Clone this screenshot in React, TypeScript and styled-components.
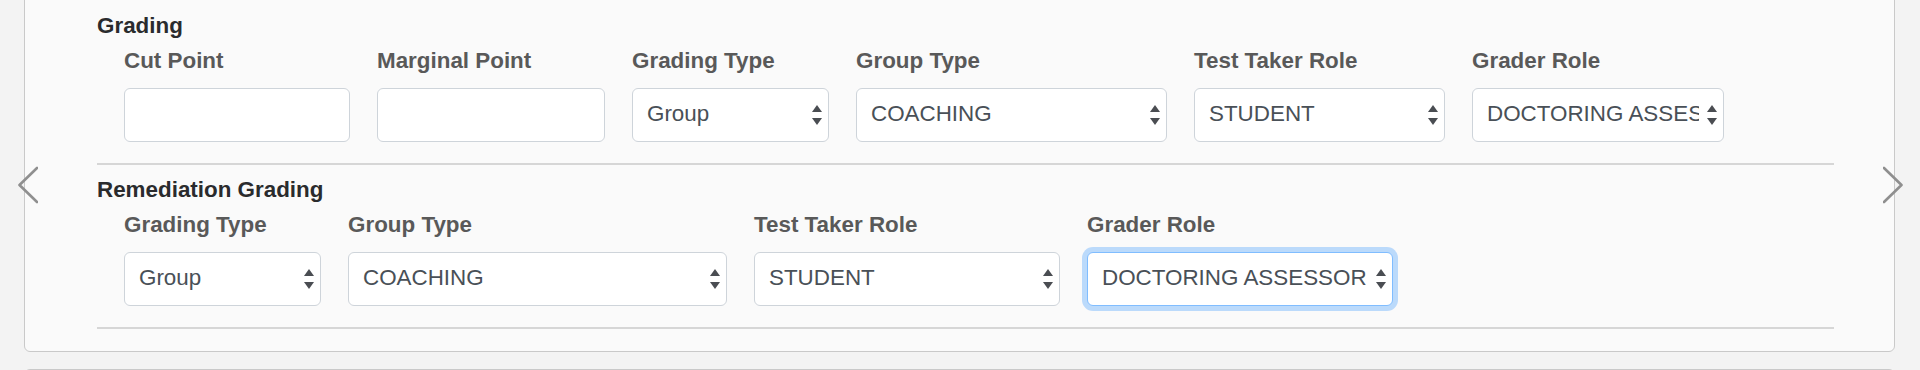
import React from "react";
import styled, { createGlobalStyle, css } from "styled-components";

const GlobalStyle = createGlobalStyle`
	html, body {
		margin: 0;
		padding: 0;
		background: #f3f3f3;
	}
	body {
		font-family: "Liberation Sans", Helvetica, Arial, sans-serif;
	}
`;

const Page = styled.div`
	position: relative;
	display: flex;
	flex-direction: column;
	padding: 0 25px 0 24px;
	height: 370px;
	overflow: hidden;
`;

const Panel = styled.div<{ $offset?: number }>`
	flex-shrink: 0;
	margin-top: ${({ $offset }) => $offset ?? 0}px;
	background: #fafafa;
	border: 1px solid #c9c9c9;
	border-radius: 6px;
	padding: 26px 60px 22px 72px;
	min-height: 60px;
`;

const Section = styled.section`
	padding-bottom: 21px;
	border-bottom: 2px solid #d6d6d6;
	& + & {
		margin-top: 12px;
	}
`;

const SectionTitle = styled.h4`
	margin: 0;
	font-size: 22.4px;
	line-height: 25px;
	font-weight: 700;
	color: #2a2b2d;
`;

const FieldRow = styled.div`
	display: flex;
	gap: 27px;
	margin-top: 10px;
	padding-left: 27px;
`;

const Field = styled.div<{ $width: number }>`
	display: flex;
	flex-direction: column;
	width: ${({ $width }) => $width}px;
`;

const Label = styled.label`
	font-size: 22.4px;
	line-height: 25px;
	font-weight: 700;
	color: #595959;
	margin-bottom: 15px;
	white-space: nowrap;
`;

const controlBase = css`
	box-sizing: border-box;
	width: 100%;
	height: 54px;
	margin: 0;
	background: #fff;
	border: 1px solid #ced4da;
	border-radius: 6px;
	font-family: "Liberation Sans", Helvetica, Arial, sans-serif;
	font-size: 22.4px;
	color: #495057;
	outline: none;
`;

const TextInput = styled.input`
	${controlBase};
	padding: 0 14px;
`;

const SelectWrap = styled.div`
	position: relative;
	height: 54px;
`;

const Select = styled.select<{ $focused?: boolean }>`
	${controlBase};
	appearance: none;
	-webkit-appearance: none;
	padding: 0 24px 3px 14px;
	${({ $focused }) =>
		$focused &&
		css`
			border-color: #80bdff;
			box-shadow: 0 0 0 5px rgba(0, 123, 255, 0.25);
		`}
`;

const SelectArrows = styled.svg`
	position: absolute;
	right: 7px;
	top: 50%;
	transform: translateY(-50%);
	pointer-events: none;
`;

const NavArrow = styled.div<{ $side: "left" | "right" }>`
	position: absolute;
	top: 166px;
	${({ $side }) => ($side === "left" ? "left: 18px;" : "right: 17px;")}
	width: 20px;
	height: 38px;
	cursor: pointer;
`;

type FieldDef = {
	label: string;
	width: number;
	kind: "input" | "select";
	options?: string[];
	value?: string;
	focused?: boolean;
};

const gradingTypes = ["Group", "Individual"];
const groupTypes = ["COACHING", "DOCTORING", "CLINICAL SKILLS"];
const takerRoles = ["STUDENT", "RESIDENT"];
const graderRoles = ["DOCTORING ASSESSOR", "COACH", "FACULTY"];

const sections: { title: string; fields: FieldDef[] }[] = [
	{
		title: "Grading",
		fields: [
			{ label: "Cut Point", width: 226, kind: "input" },
			{ label: "Marginal Point", width: 228, kind: "input" },
			{ label: "Grading Type", width: 197, kind: "select", options: gradingTypes, value: "Group" },
			{ label: "Group Type", width: 311, kind: "select", options: groupTypes, value: "COACHING" },
			{ label: "Test Taker Role", width: 251, kind: "select", options: takerRoles, value: "STUDENT" },
			{
				label: "Grader Role",
				width: 252,
				kind: "select",
				options: graderRoles,
				value: "DOCTORING ASSESSOR",
			},
		],
	},
	{
		title: "Remediation Grading",
		fields: [
			{ label: "Grading Type", width: 197, kind: "select", options: gradingTypes, value: "Group" },
			{ label: "Group Type", width: 379, kind: "select", options: groupTypes, value: "COACHING" },
			{ label: "Test Taker Role", width: 306, kind: "select", options: takerRoles, value: "STUDENT" },
			{
				label: "Grader Role",
				width: 306,
				kind: "select",
				options: graderRoles,
				value: "DOCTORING ASSESSOR",
				focused: true,
			},
		],
	},
];

const UpDown = () => (
	<SelectArrows width="10" height="20" viewBox="0 0 10 20">
		<polygon points="5,0 10,7 0,7" fill="#4a4d52" />
		<polygon points="0,13 10,13 5,20" fill="#4a4d52" />
	</SelectArrows>
);

const Chevron = ({ side }: { side: "left" | "right" }) => (
	<NavArrow $side={side}>
		<svg width="20" height="38" viewBox="0 0 20 38">
			<polyline
				points={side === "left" ? "19,2 1.5,19 19,36" : "1,2 18.5,19 1,36"}
				fill="none"
				stroke="#8f8f8f"
				strokeWidth="2.6"
				strokeLinecap="round"
				strokeLinejoin="round"
			/>
		</svg>
	</NavArrow>
);

const App = () => {
	return (
		<>
			<GlobalStyle />
			<Page>
				<Panel $offset={-14}>
					{sections.map((s) => (
						<Section key={s.title}>
							<SectionTitle>{s.title}</SectionTitle>
							<FieldRow>
								{s.fields.map((f) => (
									<Field key={f.label} $width={f.width}>
										<Label>{f.label}</Label>
										{f.kind === "input" ? (
											<TextInput type="text" />
										) : (
											<SelectWrap>
												<Select defaultValue={f.value} $focused={f.focused}>
													{f.options!.map((o) => (
														<option key={o}>{o}</option>
													))}
												</Select>
												<UpDown />
											</SelectWrap>
										)}
									</Field>
								))}
							</FieldRow>
						</Section>
					))}
				</Panel>
				<Panel $offset={17} />
				<Chevron side="left" />
				<Chevron side="right" />
			</Page>
		</>
	);
};

export default App;
